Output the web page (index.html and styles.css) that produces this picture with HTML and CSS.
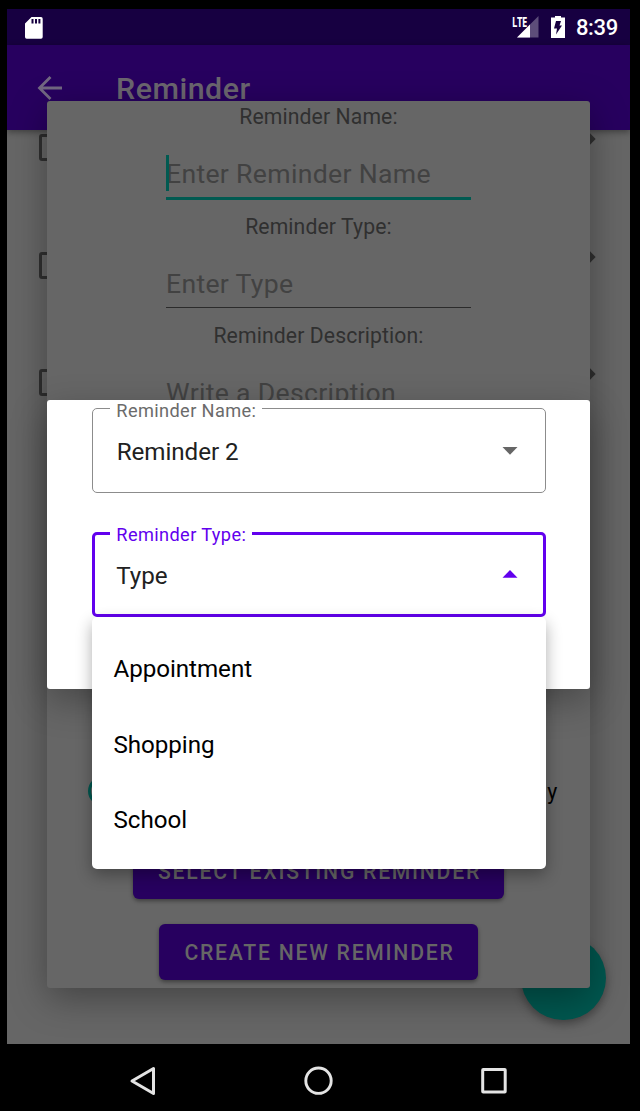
FILE: index.html
```html
<!DOCTYPE html>
<html lang="en">
<head>
<meta charset="utf-8">
<title>Reminder</title>
<link rel="stylesheet" href="styles.css">
</head>
<body>
<div class="device">
  <main class="screen">
    <header class="status-bar">
      <svg class="sd-icon" width="20" height="24" viewBox="0 0 20 24"><path fill="#fff" d="M7.500 1H17a1.700 1.700 0 0 1 1.700 1.700V21A1.700 1.700 0 0 1 17 22.700H2.700A1.700 1.700 0 0 1 1 21V7.500z"/><path stroke="#170041" stroke-width="2" d="M8.500 3v4.500M12 3v4.500M15.400 3v4.500"/></svg>
      <div class="status-right">
        <span class="lte">LTE</span>
        <svg class="signal-icon" width="22" height="22" viewBox="0 0 22 22"><path fill="#5d4d7a" d="M21.500 0v21.500H0z"/><path fill="#fff" d="M13 8.500v13H0z"/></svg>
        <svg class="battery-icon" width="14" height="22" viewBox="0 0 14 22"><path fill="#fff" d="M4 0h6v1.500h4V22H0V1.500h4z"/><path fill="#170041" d="M5 5h5L8.500 9.500H11L5 18.500l1-6H3z"/></svg>
        <span class="clock">8:39</span>
      </div>
    </header>
    <div class="app-bar">
      <svg class="back" width="26" height="26" viewBox="0 0 26 26"><path fill="none" stroke="#726882" stroke-width="2.800" d="M25 13H3M13.500 2 2.500 13l11 11"/></svg>
      <h1 class="title">Reminder</h1>
    </div>
    <section class="list">
      <div class="list-row"><span class="checkbox"></span><span class="edit"></span></div>
      <div class="list-row"><span class="checkbox"></span><span class="edit"></span></div>
      <div class="list-row"><span class="checkbox"></span><span class="edit"></span></div>
    </section>
    <div class="fab"></div>

    <section class="dialog form-dialog">
      <div class="group"><div class="label">Reminder Name:</div><div class="input focused">Enter Reminder Name</div></div>
      <div class="group"><div class="label">Reminder Type:</div><div class="input">Enter Type</div></div>
      <div class="group"><div class="label">Reminder Description:</div><div class="input">Write a Description</div></div>
      <div class="radio-row"><span class="radio"></span><span class="radio-label">y</span></div>
      <div class="buttons">
        <div class="button select"><span>SELECT EXISTING REMINDER</span></div>
        <div class="button create"><span>CREATE NEW REMINDER</span></div>
      </div>
    </section>

    <section class="dialog select-dialog">
      <div class="field"><span class="float-label">Reminder Name:</span><span class="value">Reminder 2</span>
        <svg class="caret" width="16" height="8" viewBox="0 0 16 8"><path fill="#666" d="M.5 0h15L8 7.700z"/></svg></div>
      <div class="field active"><span class="float-label">Reminder Type:</span><span class="value">Type</span>
        <svg class="caret-up" width="16" height="8" viewBox="0 0 16 8"><path fill="#6200ee" d="M.5 7.700h15L8 0z"/></svg></div>
    </section>

    <ul class="menu">
      <li>Appointment</li>
      <li>Shopping</li>
      <li>School</li>
    </ul>
  </main>
  <nav class="nav-bar">
    <svg width="28" height="30" viewBox="0 0 28 30"><path fill="none" stroke="#e4e4e4" stroke-width="3" stroke-linejoin="round" d="M24.500 2.500v25L3 15z"/></svg>
    <svg width="30" height="30" viewBox="0 0 30 30"><circle cx="14.500" cy="14.700" r="12.700" fill="none" stroke="#e4e4e4" stroke-width="2.900"/></svg>
    <svg width="28" height="28" viewBox="0 0 28 28"><rect x="2.700" y="2.500" width="22.500" height="22.500" rx=".5" fill="none" stroke="#e4e4e4" stroke-width="3"/></svg>
  </nav>
</div>
</body>
</html>
```
FILE: styles.css
```css
* { box-sizing: border-box; }
body { margin: 0; background: #000; font-family: Roboto, sans-serif; }
.device { width: 640px; height: 1111px; padding: 9px 10px 0 7px; overflow: hidden; background: #000; }
.screen { position: relative; width: 623px; height: 1035px; overflow: hidden; background: #666; }

.status-bar { height: 36px; background: #170041; display: flex; justify-content: space-between; padding: 6px 12px 0 17px; }
.sd-icon { display: block; margin-top: 0.500px; }
.status-right { display: flex; align-items: flex-start; padding-top: 1px; color: #fff; }
.lte { font: 700 13.500px/12px "Open Sans", sans-serif; transform: scaleX(.7); transform-origin: 0 0; width: 5px; letter-spacing: -.6px; white-space: nowrap; }
.signal-icon { margin-right: 12px; }
.battery-icon { margin-right: 11px; }
.clock { font-size: 22px; line-height: 24px; font-weight: 500; letter-spacing: -.3px; }

.app-bar { position: relative; height: 85px; background: #27005f; display: flex; align-items: center; padding-left: 29.500px; box-shadow: 0 2px 7px rgba(0,0,0,.4); }
.back { display: block; }
.title { margin: 2px 0 0 53.500px; font-size: 30.400px; font-weight: 500; line-height: 36px; letter-spacing: .5px; color: #6b666f; }

.list { display: flex; flex-direction: column; gap: 90.500px; padding: 4px 34px 0 32px; }
.list-row { display: flex; justify-content: space-between; height: 27px; }
.checkbox { width: 27px; height: 27px; border: 3px solid #303030; border-radius: 3px; }
.edit { width: 8px; height: 8px; margin: 1px 2px 0 0; background: #303030; transform: rotate(45deg); }

.fab { position: absolute; left: 514px; top: 926.500px; width: 84.500px; height: 84.500px; border-radius: 50%; background: #01574f; box-shadow: 0 4px 10px rgba(0,0,0,.35); }

.dialog { position: absolute; left: 40.300px; width: 542.400px; border-radius: 3px; }
.form-dialog { top: 92px; height: 887px; background: #666; box-shadow: 0 10px 36px rgba(0,0,0,.34); display: flex; flex-direction: column; align-items: center; padding-top: 2px; }
.group { height: 109.600px; flex: none; text-align: center; }
.label { font-size: 21.200px; line-height: 28px; letter-spacing: .11px; color: #303030; white-space: nowrap; }
.input { position: relative; width: 305px; height: 67.800px; margin: 0 auto; padding-top: 25px; border-bottom: 1px solid #2b2b2b; text-align: left; font-size: 26.600px; line-height: 36px; letter-spacing: .32px; color: #424242; white-space: nowrap; }
.focused { height: 69px; border-bottom: 3px solid #015a51; }
.focused::before { content: ""; position: absolute; left: 0; top: 24px; width: 2.700px; height: 36px; background: #015a51; }
.radio-row { flex: none; align-self: stretch; display: flex; justify-content: space-between; height: 30px; margin-top: 344.500px; padding: 0 32.500px 0 41px; }
.radio { width: 30px; height: 30px; border: 3px solid #01574f; border-radius: 50%; }
.radio-label { font-size: 21.200px; line-height: 31px; color: #000; }
.buttons { display: flex; flex-direction: column; align-items: center; gap: 25px; margin-top: 36.500px; }
.button { height: 56px; display: flex; align-items: center; justify-content: center; padding: 2px 0 0 2px; border-radius: 6px; background: #27005f; color: #666; font-size: 21.200px; font-weight: 500; letter-spacing: 1.740px; white-space: nowrap; box-shadow: 0 2px 4px rgba(0,0,0,.4); }
.select { width: 371px; }
.create { width: 319px; }

.select-dialog { top: 391px; height: 289px; background: #fff; box-shadow: 0 12px 36px rgba(0,0,0,.3); padding: 8px 44px 0 45px; display: flex; flex-direction: column; gap: 39.500px; }
.field { position: relative; height: 84.500px; border: 1px solid #8c8c8c; border-radius: 5px; display: flex; align-items: center; justify-content: space-between; padding: 0 27px 0 23.500px; }
.active { border: 3px solid #6200ee; padding: 0 25px 0 21px; }
.value { font-size: 24.200px; line-height: 30px; letter-spacing: -.08px; color: #212121; padding-top: 3px; }
.caret { margin-top: 2px; }
.caret-up { margin-top: -1px; }
.float-label { position: absolute; left: 17px; top: -8px; padding: 0 6px; background: #fff; font-size: 18.200px; line-height: 19px; letter-spacing: .38px; color: #6b6b6b; white-space: nowrap; }
.active .float-label { left: 15px; top: -10px; color: #6200ee; }

.menu { position: absolute; left: 85px; top: 608px; width: 454px; height: 252px; margin: 0; padding: 14.500px 0 10px; list-style: none; background: #fff; border-radius: 5px; box-shadow: 0 6px 16px rgba(0,0,0,.32); }
.menu li { height: 75.600px; display: flex; align-items: center; padding-left: 21.500px; font-size: 24.200px; letter-spacing: -.06px; color: #000; }

.nav-bar { height: 67px; display: flex; justify-content: space-between; align-items: center; padding: 6px 122px 0 122px; }
```
